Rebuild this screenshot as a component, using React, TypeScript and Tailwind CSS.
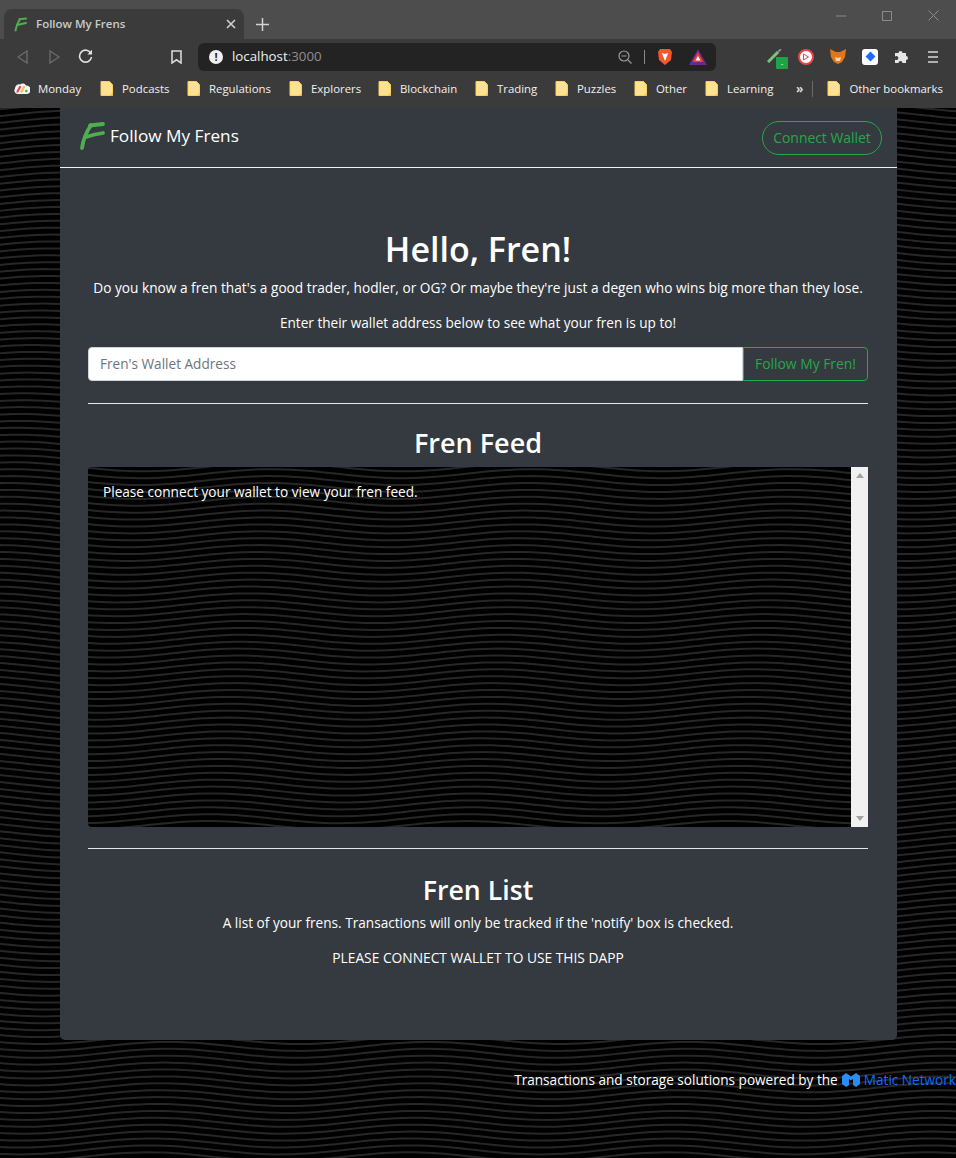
import React from "react";

const waveLines = () => {
  const out: string[] = [];
  const dy = 6.9;
  const L = 260;
  const A = 4.5;
  for (let i = -3; i < 160; i++) {
    const y0 = i * dy;
    const cx = 245 - (y0 + 108 - 620) * 0.18;
    let d = "";
    for (let x = -4; x <= 960; x += 8) {
      const y = y0 - A * Math.cos((2 * Math.PI * (x - cx)) / L);
      d += (d ? "L" : "M") + x + " " + y.toFixed(2);
    }
    out.push(d);
  }
  return out;
};
const lines = waveLines();

const WavePaths = () => (
  <>
    {lines.map((d, i) => (
      <path key={i} d={d} fill="none" stroke="#272727" strokeWidth="2" />
    ))}
  </>
);

const Folder = () => (
  <svg width="13" height="15" viewBox="0 0 13 15" className="shrink-0">
    <path d="M1 .5h8.500l3 3.200v10.800H1z" fill="#fde293" stroke="#fcd15a" />
    <path d="M10 14.500h2.500V12z" fill="#e8b93e" />
  </svg>
);

const Bookmark = ({ label, w }: { label: string; w: string }) => (
  <div className={`flex items-center gap-[9px] whitespace-nowrap ${w}`}>
    <Folder />
    <span className="text-[11.400px] text-[#f1f1f1]">{label}</span>
  </div>
);

const FPaths = () => (
  <>
    <path d="M4 27C5 20 9 10 13 4" />
    <path d="M12 4.500L25 3" />
    <path d="M8 16C14 14 19 13 25 12" />
  </>
);

export default function App() {
  return (
    <div className="relative w-[956px] h-[1158px] overflow-hidden bg-black font-['Open_Sans','Noto_Sans',sans-serif] text-white">
      <div className="relative flex flex-col">
        {/* Tab strip */}
        <div className="flex h-[39px] items-end bg-[#4d4d4d] pl-1">
          <div className="flex h-[30px] w-[240px] items-center rounded-t-lg bg-[#3b3b3b] pl-[9px] pr-2">
            <svg width="15" height="15" viewBox="0 0 28 30" fill="none" stroke="#4fae52" strokeWidth="4" strokeLinecap="round"><FPaths /></svg>
            <span className="ml-[8px] flex-1 text-[11.500px] font-semibold text-[#c8ccd0]">Follow My Frens</span>
            <svg width="10" height="10" viewBox="0 0 10 10"><path d="M1 1l8 8M9 1l-8 8" stroke="#d0d0d0" strokeWidth="1.600" /></svg>
          </div>
          <svg className="mb-[8px] ml-[12px]" width="13" height="13" viewBox="0 0 13 13"><path d="M6.500 0v13M0 6.500h13" stroke="#d4d4d4" strokeWidth="1.500" /></svg>
          <div className="mb-[10px] ml-auto flex h-[29px] items-center gap-[36px] self-start pt-[2px] pr-[17px]">
            <svg width="10" height="10" viewBox="0 0 10 10"><path d="M0 5h10" stroke="#8c8c8c" /></svg>
            <svg width="10" height="10" viewBox="0 0 10 10"><path d="M.5.5h9v9h-9z" fill="none" stroke="#8c8c8c" /></svg>
            <svg width="11" height="11" viewBox="0 0 11 11"><path d="M.5.5l10 10M10.500.5l-10 10" stroke="#8c8c8c" /></svg>
          </div>
        </div>
        {/* Toolbar */}
        <div className="flex h-[35px] items-center bg-[#3b3b3b] pl-[17px]">
          <svg width="11" height="14" viewBox="0 0 11 14"><path d="M10 1L1 7l9 6z" fill="none" stroke="#6d6d6d" strokeWidth="1.300" /></svg>
          <svg className="ml-[21px]" width="11" height="14" viewBox="0 0 11 14"><path d="M1 1l9 6-9 6z" fill="none" stroke="#6d6d6d" strokeWidth="1.300" /></svg>
          <svg className="ml-[18px]" width="15" height="15" viewBox="0 0 15 15"><path d="M13 4.600A6 6 0 1 0 13.500 8" fill="none" stroke="#e4e4e4" strokeWidth="1.600" /><path d="M14 .8v4.700H9.400z" fill="#e4e4e4" /></svg>
          <svg className="ml-[78px]" width="11" height="14" viewBox="0 0 11 14"><path d="M1 1h9v12L5.500 9.800 1 13z" fill="none" stroke="#d8d8d8" strokeWidth="1.600" /></svg>
          <div className="ml-[16px] flex h-[28px] w-[518px] items-center rounded-[6px] bg-[#232323] pl-[11px]">
            <div className="flex h-[14px] w-[14px] items-center justify-center rounded-full bg-[#f0f0f0] text-[11px] font-bold leading-none text-[#232323]">!</div>
            <span className="ml-[9px] text-[13.300px] text-[#f0f0f0]">localhost<span className="text-[#8f8f8f]">:3000</span></span>
            <svg className="ml-auto" width="14" height="14" viewBox="0 0 14 14"><circle cx="6" cy="6" r="5" fill="none" stroke="#9a9a9a" strokeWidth="1.200" /><path d="M3.500 6h5M10 10l3.500 3.500" stroke="#9a9a9a" strokeWidth="1.200" /></svg>
            <div className="ml-[12px] h-[14px] w-px bg-[#8a8a8a]" />
            <svg className="ml-[12px]" width="16" height="18" viewBox="0 0 16 18"><path d="M3 1h10l2 3-1 8-6 5-6-5L1 4z" fill="#f1592a" /><path d="M8 6L5 5l1 3 2 5 2-5 1-3z" fill="#fff" /></svg>
            <svg className="ml-[16px] mr-[9px]" width="18" height="16" viewBox="0 0 18 16"><path d="M9 0l9 16H0z" fill="#6b2a86" /><path d="M9 3l5.500 10h-11z" fill="#e2423f" /><path d="M9 7l2.500 4.500h-5z" fill="#fff" /></svg>
          </div>
          <div className="relative ml-[51px]">
            <svg width="16" height="16" viewBox="0 0 16 16"><path d="M1 13L11 3" stroke="#7bc47f" strokeWidth="3" /><path d="M11 3l3-3" stroke="#888" strokeWidth="2" /></svg>
            <div className="absolute left-[9px] top-[8px] flex h-[12px] w-[12px] items-center justify-center rounded-[1px] bg-[#1ea446] text-[8px] leading-none text-white">-</div>
          </div>
          <div className="ml-[15px] flex h-[16px] w-[16px] items-center justify-center rounded-full border-2 border-[#e8454f] bg-white">
            <svg width="8" height="8" viewBox="0 0 8 8"><path d="M1.500 1l5 3-5 3z" fill="none" stroke="#e8454f" /></svg>
          </div>
          <svg className="ml-[16px]" width="16" height="15" viewBox="0 0 16 15"><path d="M0 0l6 3h4l6-3-1 8-3 5-4 2-4-2-3-5z" fill="#e2761b" /><path d="M5 8l3 1 3-1-1 4H6z" fill="#f6d3b0" /></svg>
          <div className="ml-[16px] flex h-[16px] w-[16px] items-center justify-center rounded-[3px] bg-white">
            <div className="h-[7px] w-[7px] rotate-45 bg-[#1f6bff]" />
          </div>
          <svg className="ml-[16px]" width="15" height="15" viewBox="0 0 15 15"><path d="M1 4h3.500a2 2 0 1 1 4 0H12v3a2 2 0 1 1 0 4v3H8.500a2 2 0 1 0-4 0H1v-3.500a2 2 0 1 0 0-3z" fill="#e6e6e6" /></svg>
          <svg className="ml-[19px]" width="10" height="12" viewBox="0 0 10 12"><path d="M0 1h10M0 6h10M0 11h10" stroke="#d8d8d8" strokeWidth="1.600" /></svg>
        </div>
        {/* Bookmarks */}
        <div className="flex h-[34px] items-center bg-[#3b3b3b] pb-[4px] pl-[14px]">
          <div className="flex w-[86px] items-center gap-[8px]">
            <svg width="16" height="11" viewBox="0 0 16 11">
              <path d="M4 11A3.500 3.500 0 0 1 1 5.500 4 4 0 0 1 6 1.500 4 4 0 0 1 12 2.500 4 4 0 0 1 13 11z" fill="#f4f4f4" />
              <path d="M3.500 8.500L6 4" stroke="#e8435a" strokeWidth="2.200" strokeLinecap="round" />
              <path d="M7.500 8.500L10 4" stroke="#f9c33e" strokeWidth="2.200" strokeLinecap="round" />
              <circle cx="12.300" cy="8" r="1.300" fill="#34b76c" />
            </svg>
            <span className="text-[11.400px] text-[#f1f1f1]">Monday</span>
          </div>
          <Bookmark label="Podcasts" w="w-[87px]" />
          <Bookmark label="Regulations" w="w-[102px]" />
          <Bookmark label="Explorers" w="w-[89px]" />
          <Bookmark label="Blockchain" w="w-[97px]" />
          <Bookmark label="Trading" w="w-[80px]" />
          <Bookmark label="Puzzles" w="w-[79px]" />
          <Bookmark label="Other" w="w-[71px]" />
          <Bookmark label="Learning" w="w-[91px]" />
          <span className="text-[12px] font-bold text-[#d8d8d8]">»</span>
          <div className="ml-[9px] mr-[14px] h-[16px] w-px bg-[#6b6b6b]" />
          <Bookmark label="Other bookmarks" w="w-[118px]" />
        </div>

        {/* Page */}
        <div className="relative h-[1050px]">
          <svg className="absolute left-0 top-0" width="956" height="1050" viewBox="0 0 956 1050"><WavePaths /></svg>
          <div className="relative mx-[60px] h-[932px] w-[837px] rounded-b-[5px] bg-[#343a40]">
            <nav className="flex h-[59px] items-center justify-between border-b border-[#f2f2f2] pl-[18px] pr-[15px] box-content">
              <div className="-mt-[3px] flex items-center gap-[4px]">
                <svg width="28" height="30" viewBox="0 0 28 30" fill="none" stroke="#4fae52" strokeWidth="3.800" strokeLinecap="round"><FPaths /></svg>
                <span className="text-[17.200px] text-white">Follow My Frens</span>
              </div>
              <button className="mt-[1px] h-[34px] w-[120px] rounded-full border border-[#28a745] text-[13.900px] text-[#28a745]">Connect Wallet</button>
            </nav>

            <div className="pl-[28px] pr-[29px] pt-[59px] text-center">
              <h1 className="text-[34px] font-semibold leading-[44px] text-white">Hello, Fren!</h1>
              <p className="mt-[5px] whitespace-nowrap text-[13.700px] leading-[24px] text-white">Do you know a fren that's a good trader, hodler, or OG? Or maybe they're just a degen who wins big more than they lose.</p>
              <p className="mt-[11px] text-[13.600px] leading-[24px] text-white">Enter their wallet address below to see what your fren is up to!</p>
              <div className="mt-[12px] flex h-[34px]">
                <input readOnly placeholder="Fren's Wallet Address" className="flex-1 rounded-l-[4px] border border-[#ced4da] bg-white px-[11px] pt-[1px] text-[13.600px] placeholder:text-[#6c757d]" />
                <button className="w-[125px] rounded-r-[4px] border border-[#28a745] pt-[1px] text-[13.850px] text-[#28a745]">Follow My Fren!</button>
              </div>
              <hr className="mt-[22px] border-t border-[#e6e6e6]" />
              <h2 className="mt-[19px] text-[27px] font-semibold leading-[40px] text-white">Fren Feed</h2>
              <div className="relative mt-[4px] flex h-[360px] overflow-hidden rounded-l-[4px] bg-black">
                <svg className="absolute left-0 top-0" width="780" height="360" viewBox="88 359 780 360"><WavePaths /></svg>
                <p className="relative flex-1 px-[15px] pt-[13px] text-left text-[13.630px] leading-[24px] text-white">Please connect your wallet to view your fren feed.</p>
                <div className="relative flex w-[17px] flex-col items-center justify-between bg-[#f1f1f1] py-[6px]">
                  <svg width="8" height="5" viewBox="0 0 8 5"><path d="M4 0l4 5H0z" fill="#a3a3a3" /></svg>
                  <svg width="8" height="5" viewBox="0 0 8 5"><path d="M0 0h8L4 5z" fill="#a3a3a3" /></svg>
                </div>
              </div>
              <hr className="mt-[21px] border-t border-[#e6e6e6]" />
              <h2 className="mt-[21px] text-[26.700px] font-semibold leading-[40px] text-white">Fren List</h2>
              <p className="mt-[1px] text-[13.630px] leading-[24px] text-white">A list of your frens. Transactions will only be tracked if the 'notify' box is checked.</p>
              <p className="mt-[11px] text-[13.780px] leading-[24px] text-white">PLEASE CONNECT WALLET TO USE THIS DAPP</p>
            </div>
          </div>
          <div className="relative mt-[28px] flex items-center justify-end whitespace-nowrap text-[13.600px] leading-[24px] text-white">
            <span>Transactions and storage solutions powered by the</span>
            <svg className="mx-[4px]" width="18" height="14" viewBox="0 0 18 14"><path d="M0 3l4-3 5 3.500L14 0l4 3v8l-4 3-3-2V6L9 7.500 7 6v6l-3 2-4-3z" fill="#2b8cf2" /></svg>
            <span className="text-[#0d6efd]">Matic Network</span>
          </div>
        </div>
      </div>
    </div>
  );
}
